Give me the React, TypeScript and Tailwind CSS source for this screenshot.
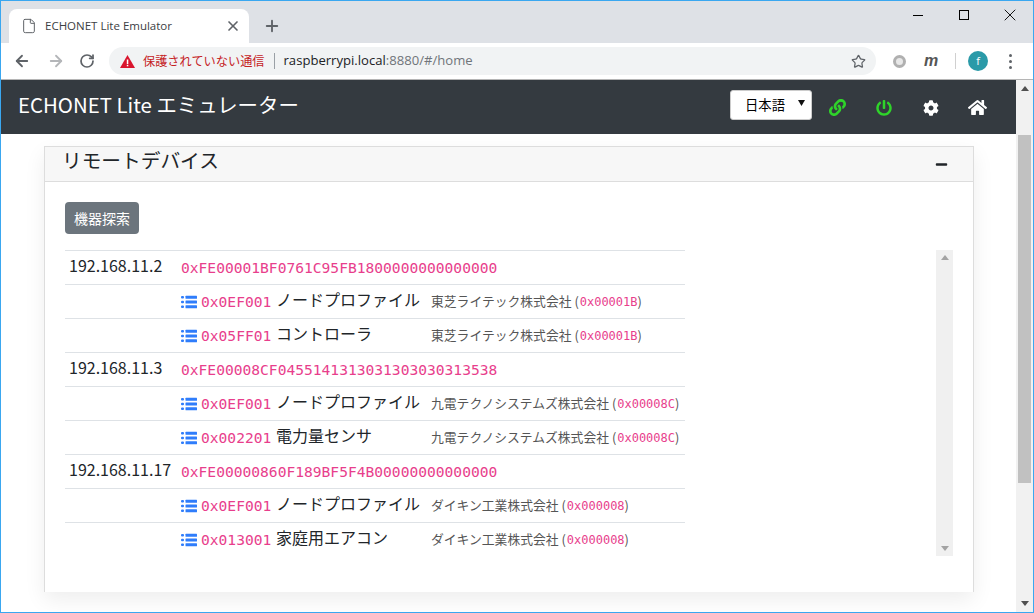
import { FaCog, FaHome, FaLink, FaMinus, FaPowerOff } from "react-icons/fa";
import { ArrowLeft, ArrowRight, File, Plus, RotateCw, Star, X } from "lucide-react";

const jp = "font-['Noto_Sans_CJK_JP','Noto_Sans',sans-serif]";

type Device = { code: string; name: string; maker: string; makerCode: string };
type Node = { ip: string; id: string; devices: Device[] };

const nodes: Node[] = [
  {
    ip: "192.168.11.2",
    id: "0xFE00001BF0761C95FB1800000000000000",
    devices: [
      { code: "0x0EF001", name: "ノードプロファイル", maker: "東芝ライテック株式会社", makerCode: "0x00001B" },
      { code: "0x05FF01", name: "コントローラ", maker: "東芝ライテック株式会社", makerCode: "0x00001B" },
    ],
  },
  {
    ip: "192.168.11.3",
    id: "0xFE00008CF0455141313031303030313538",
    devices: [
      { code: "0x0EF001", name: "ノードプロファイル", maker: "九電テクノシステムズ株式会社", makerCode: "0x00008C" },
      { code: "0x002201", name: "電力量センサ", maker: "九電テクノシステムズ株式会社", makerCode: "0x00008C" },
    ],
  },
  {
    ip: "192.168.11.17",
    id: "0xFE00000860F189BF5F4B00000000000000",
    devices: [
      { code: "0x0EF001", name: "ノードプロファイル", maker: "ダイキン工業株式会社", makerCode: "0x000008" },
      { code: "0x013001", name: "家庭用エアコン", maker: "ダイキン工業株式会社", makerCode: "0x000008" },
    ],
  },
];

const mono = "font-['DejaVu_Sans_Mono',monospace] text-[#e83e8c]";

function ListIcon() {
  return (
    <svg width="16" height="14" viewBox="0 0 16 14" fill="#2f7dfb" className="mt-[1px] shrink-0">
      <rect x="0" y="1" width="3" height="2.5" rx="1" />
      <rect x="0" y="5.75" width="3" height="2.5" rx="1" />
      <rect x="0" y="10.5" width="3" height="2.5" rx="1" />
      <rect x="4.5" y="0.75" width="11.5" height="3" rx="0.5" />
      <rect x="4.5" y="5.5" width="11.5" height="3" rx="0.5" />
      <rect x="4.5" y="10.25" width="11.5" height="3" rx="0.5" />
    </svg>
  );
}

function TabStrip() {
  return (
    <div className="flex h-[42px] shrink-0 items-end bg-[#dee1e6] pl-2">
      <div className="flex h-[34px] w-[240px] items-center rounded-t-lg bg-white pl-[12px] pr-[8px]">
        <File size={16} strokeWidth={1.5} className="text-[#5f6368]" />
        <span className="ml-[8px] flex-1 font-['Open_Sans',sans-serif] text-[11.5px] text-[#3c4043]">
          ECHONET Lite Emulator
        </span>
        <X size={16} strokeWidth={2.5} className="text-[#5f6368]" />
      </div>
      <div className="ml-[14px] flex h-[34px] items-center">
        <Plus size={18} strokeWidth={2.5} className="text-[#5f6368]" />
      </div>
      <div className="ml-auto flex h-full">
        <div className="flex w-[46px] items-center justify-center pb-[14px]">
          <div className="h-px w-[10px] bg-black" />
        </div>
        <div className="flex w-[46px] items-center justify-center pb-[14px]">
          <div className="h-[10px] w-[10px] border border-black" />
        </div>
        <div className="flex w-[46px] items-center justify-center pb-[14px]">
          <X size={20} strokeWidth={1.1} className="text-black" />
        </div>
      </div>
    </div>
  );
}

function Toolbar() {
  return (
    <div className="flex h-[37px] shrink-0 items-center border-b border-[#b5b5b5] bg-white">
      <ArrowLeft size={18} strokeWidth={2.4} className="ml-[12px] text-[#5f6368]" />
      <ArrowRight size={18} strokeWidth={2.4} className="ml-[16px] text-[#b4b6b9]" />
      <RotateCw size={16} strokeWidth={2.6} className="ml-[14px] text-[#5f6368]" />
      <div className="ml-[14px] flex h-[28px] w-[767px] items-center rounded-full bg-[#f1f3f4] pl-[11px] pr-[10px]">
        <svg width="15" height="13" viewBox="0 0 15 13">
          <path d="M7.5 0 15 13H0Z" fill="#d9152d" />
          <rect x="6.8" y="4.5" width="1.5" height="4.5" fill="#fff" />
          <rect x="6.8" y="9.8" width="1.5" height="1.5" fill="#fff" />
        </svg>
        <span className={`ml-[8px] text-[12.2px] text-[#c5221f] ${jp}`}>保護されていない通信</span>
        <div className="ml-[9px] h-[16px] w-px bg-[#9aa0a6]" />
        <span className="ml-[9px] font-['Open_Sans',sans-serif] text-[13.1px] text-[#202124]">
          raspberrypi.local<span className="text-[#70757a]">:8880/#/home</span>
        </span>
        <Star size={15} strokeWidth={2} className="ml-auto text-[#5f6368]" />
      </div>
      <div className="ml-[17px] h-[13px] w-[13px] rounded-full border-[3px] border-[#b0b0b0] bg-[#e8e8e8]" />
      <span className="ml-[18px] w-[15px] font-['Liberation_Sans',sans-serif] text-[16px] font-bold italic leading-none text-[#555]">
        m
      </span>
      <div className="ml-[16px] h-[16px] w-px bg-[#d0d0d0]" />
      <div className="ml-[12px] flex h-[20px] w-[20px] items-center justify-center rounded-full bg-[#2a9aa8] font-['Open_Sans',sans-serif] text-[11px] text-white">
        f
      </div>
      <div className="ml-[21px] flex flex-col gap-[3px]">
        <div className="h-[3px] w-[3px] rounded-full bg-[#5f6368]" />
        <div className="h-[3px] w-[3px] rounded-full bg-[#5f6368]" />
        <div className="h-[3px] w-[3px] rounded-full bg-[#5f6368]" />
      </div>
    </div>
  );
}

function Navbar() {
  return (
    <div className="flex h-[54px] shrink-0 items-center bg-[#343a40] pl-[17px]">
      <span className={`-mt-[6px] text-[20.4px] text-white ${jp}`}>ECHONET Lite エミュレーター</span>
      <div className="mb-[4px] ml-auto flex h-[30px] w-[82px] items-center rounded-[3px] border border-[#ccc] bg-white pl-[14px]">
        <span className={`text-[13.33px] text-black ${jp}`}>日本語</span>
        <svg width="7" height="6" viewBox="0 0 7 6" className="mb-[4px] ml-[13px]">
          <path d="M0 0h7L3.5 6Z" fill="#111" />
        </svg>
      </div>
      <FaLink size={17} className="ml-[17px] mt-[1px] text-[#2fd32a]" />
      <FaPowerOff size={16} className="ml-[30px] mt-[1px] text-[#2fd32a]" />
      <FaCog size={16} className="ml-[31px] mt-[1px] text-white" />
      <FaHome size={19} className="ml-[29px] mr-[29px] mt-[1px] text-white" />
    </div>
  );
}

function Row({ left, children }: { left?: string; children: React.ReactNode }) {
  return (
    <div className="flex h-[34px] items-center border-t border-[#dee2e6]">
      <div className={`-mt-[5px] w-[116px] shrink-0 pl-[4px] text-[16px] text-[#212529] ${jp}`}>{left}</div>
      {children}
    </div>
  );
}

function NodeTable() {
  return (
    <div className="w-[620px] shrink-0">
      {nodes.map((node) => (
        <div key={node.id}>
          <Row left={node.ip}>
            <span className={`text-[14.6px] ${mono}`}>{node.id}</span>
          </Row>
          {node.devices.map((d) => (
            <Row key={d.code}>
              <div className="flex w-[95px] shrink-0 items-center">
                <ListIcon />
                <span className={`ml-[4px] text-[14.6px] ${mono}`}>{d.code}</span>
              </div>
              <span className={`-mt-[5px] w-[155px] shrink-0 text-[16px] text-[#212529] ${jp}`}>{d.name}</span>
              <span className={`-mt-[2px] whitespace-nowrap text-[12.8px] text-[#555] ${jp}`}>
                {d.maker} (<span className={`ml-[1px] text-[12px] ${mono}`}>{d.makerCode}</span>)
              </span>
            </Row>
          ))}
        </div>
      ))}
    </div>
  );
}

function Card() {
  return (
    <div className="ml-[43px] mr-[42px] mt-[12px] h-[446px] border border-b-0 border-[#ddd] bg-white shadow-[0_8px_20px_rgba(0,0,0,0.07)]">
      <div className="flex h-[35px] items-center justify-between border-b border-[#ddd] bg-[#f7f7f7] pl-[17px] pr-[25px]">
        <span className={`-mt-[9px] text-[19.7px] text-[#212529] ${jp}`}>リモートデバイス</span>
        <FaMinus size={13} className="text-[#212529]" />
      </div>
      <div className="px-[20px] pt-[20px]">
        <button className={`h-[32px] w-[74px] rounded bg-[#6c757d] text-[14px] text-white ${jp}`}>機器探索</button>
        <div className="mt-[16px] flex justify-between">
          <NodeTable />
          <div className="flex h-[306px] w-[17px] flex-col items-center justify-between bg-[#f0f0f0] py-[5px]">
            <div className="h-0 w-0 border-x-[4px] border-b-[5px] border-x-transparent border-b-[#a3a3a3]" />
            <div className="h-0 w-0 border-x-[4px] border-t-[5px] border-x-transparent border-t-[#a3a3a3]" />
          </div>
        </div>
      </div>
    </div>
  );
}

export default function App() {
  return (
    <div className="flex h-[613px] w-[1034px] flex-col overflow-hidden border border-[#3aa7f0] bg-white">
      <TabStrip />
      <Toolbar />
      <div className="flex min-h-0 flex-1">
        <div className="min-w-0 flex-1">
          <Navbar />
          <Card />
        </div>
        <div className="flex w-[17px] shrink-0 flex-col items-center bg-[#f1f1f1]">
          <div className="mt-[6px] h-0 w-0 border-x-[4px] border-b-[5px] border-x-transparent border-b-[#505050]" />
          <div className="mt-[44px] h-[348px] w-[13px] bg-[#c1c1c1]" />
          <div className="mb-[6px] mt-auto h-0 w-0 border-x-[4px] border-t-[5px] border-x-transparent border-t-[#505050]" />
        </div>
      </div>
    </div>
  );
}
